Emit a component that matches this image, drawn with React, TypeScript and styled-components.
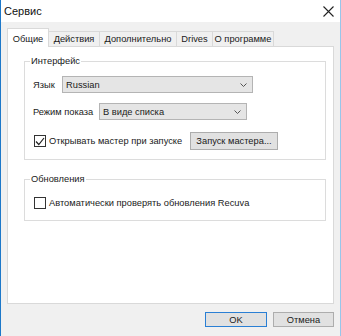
import React from 'react';
import styled, { createGlobalStyle } from 'styled-components';

const GlobalStyles = createGlobalStyle`
  html, body {
    margin: 0;
    padding: 0;
    background: #ffffff;
  }
  * {
    box-sizing: border-box;
  }
`;

const Window = styled.div`
  width: 341px;
  height: 336px;
  display: flex;
  flex-direction: column;
  border-left: 1px solid #1d78c9;
  border-right: 1px solid #97c6ea;
  font-family: "Liberation Sans", Arial, sans-serif;
  font-size: 9.3px;
  color: #1a1a1a;
  overflow: hidden;
`;

const TitleBar = styled.div`
  height: 22px;
  flex: none;
  display: flex;
  align-items: center;
  justify-content: space-between;
  padding: 0 6px 0 3px;
  background: #ffffff;
`;

const Title = styled.span`
  font-size: 11px;
  color: #111;
`;

const CloseIcon = styled.svg`
  display: block;
  margin-top: 1px;
`;

const Body = styled.div`
  flex: 1;
  display: flex;
  flex-direction: column;
  padding: 6px 6px 0 6px;
  background: #f0f0f0;
  min-height: 0;
`;

const TabStrip = styled.div`
  display: flex;
  align-items: flex-end;
  height: 19px;
  margin-bottom: -1px;
  position: relative;
  z-index: 1;
`;

const Tab = styled.div<{ $active?: boolean; $width: number }>`
  width: ${p => p.$width}px;
  height: ${p => (p.$active ? 19 : 15)}px;
  margin-bottom: ${p => (p.$active ? 0 : 1)}px;
  margin-left: -1px;
  display: flex;
  align-items: center;
  justify-content: center;
  border: 1px solid #d9d9d9;
  border-bottom: none;
  background: ${p => (p.$active ? '#ffffff' : '#f0f0f0')};
  padding-top: ${p => (p.$active ? 1 : 0)}px;
  white-space: nowrap;
  &:first-child {
    margin-left: 0;
  }
`;

const Panel = styled.div`
  flex: 1;
  display: flex;
  flex-direction: column;
  gap: 13px;
  padding: 8px 7px 0 16px;
  background: #ffffff;
  border: 1px solid #d9d9d9;
`;

const Group = styled.fieldset<{ $padTop: number; $padBottom: number }>`
  margin: 0;
  min-width: 0;
  border: 1px solid #dcdcdc;
  padding: ${p => p.$padTop}px 0 ${p => p.$padBottom}px 8px;
  display: flex;
  flex-direction: column;
`;

const Legend = styled.legend`
  margin-left: -3px;
  padding: 0 1px;
  line-height: 12px;
  height: 12px;
`;

const Row = styled.div<{ $height: number; $gapAfter?: number }>`
  height: ${p => p.$height}px;
  margin-bottom: ${p => p.$gapAfter || 0}px;
  display: flex;
  align-items: center;
`;

const FieldLabel = styled.span<{ $width: number }>`
  width: ${p => p.$width}px;
  flex: none;
  white-space: nowrap;
`;

const Select = styled.div<{ $width: number }>`
  width: ${p => p.$width}px;
  height: 17px;
  display: flex;
  align-items: center;
  justify-content: space-between;
  padding: 0 5px 0 3px;
  background: #e5e5e5;
  border: 1px solid #b4b4b4;
`;

const Check = styled.span<{ $checked?: boolean }>`
  width: 12px;
  height: 12px;
  flex: none;
  margin: 0 3px 0 1px;
  display: flex;
  align-items: center;
  justify-content: center;
  background: #ffffff;
  border: 1px solid #333333;
`;

const CheckText = styled.span`
  white-space: nowrap;
`;

const Button = styled.button<{ $default?: boolean; $width: number }>`
  width: ${p => p.$width}px;
  height: 15px;
  padding: 0;
  font: inherit;
  color: #1a1a1a;
  background: #e1e1e1;
  border: 1px solid ${p => (p.$default ? '#2a7fd4' : '#adadad')};
  display: flex;
  align-items: center;
  justify-content: center;
  white-space: nowrap;
`;

const WizardButton = styled(Button)`
  height: 18px;
  margin-left: auto;
  margin-right: 47px;
`;

const Footer = styled.div`
  flex: none;
  display: flex;
  justify-content: flex-end;
  gap: 6px;
  padding: 8px 0 9px;
`;

const Chevron = () => (
  <svg width="7" height="4" viewBox="0 0 7 4">
    <polyline points="0.5,0.5 3.5,3.5 6.5,0.5" fill="none" stroke="#555" strokeWidth="1" />
  </svg>
);

const tabs = [
  { label: 'Общие', width: 42 },
  { label: 'Действия', width: 52 },
  { label: 'Дополнительно', width: 78 },
  { label: 'Drives', width: 37 },
  { label: 'О программе', width: 62 },
];

function App() {
  return (
    <>
      <GlobalStyles />
      <Window>
        <TitleBar>
          <Title>Сервис</Title>
          <CloseIcon width="11" height="11" viewBox="0 0 11 11">
            <path d="M0.5 0.5 L10.5 10.5 M10.5 0.5 L0.5 10.5" stroke="#222" strokeWidth="1.1" />
          </CloseIcon>
        </TitleBar>
        <Body>
          <TabStrip>
            {tabs.map((t, i) => (
              <Tab key={t.label} $active={i === 0} $width={t.width}>
                {t.label}
              </Tab>
            ))}
          </TabStrip>
          <Panel>
            <Group $padTop={9} $padBottom={9}>
              <Legend>Интерфейс</Legend>
              <Row $height={17} $gapAfter={10}>
                <FieldLabel $width={29}>Язык</FieldLabel>
                <Select $width={191}>
                  <span>Russian</span>
                  <Chevron />
                </Select>
              </Row>
              <Row $height={17} $gapAfter={12}>
                <FieldLabel $width={66}>Режим показа</FieldLabel>
                <Select $width={148}>
                  <span>В виде списка</span>
                  <Chevron />
                </Select>
              </Row>
              <Row $height={18}>
                <Check $checked>
                  <svg width="10" height="9" viewBox="0 0 10 9">
                    <polyline points="1,4.5 3.8,7.5 9,1" fill="none" stroke="#222" strokeWidth="1.2" />
                  </svg>
                </Check>
                <CheckText>Открывать мастер при запуске</CheckText>
                <WizardButton $width={88}>Запуск мастера...</WizardButton>
              </Row>
            </Group>
            <Group $padTop={11} $padBottom={11}>
              <Legend>Обновления</Legend>
              <Row $height={13}>
                <Check />
                <CheckText>Автоматически проверять обновления Recuva</CheckText>
              </Row>
            </Group>
          </Panel>
          <Footer>
            <Button $default $width={62}>OK</Button>
            <Button $width={61}>Отмена</Button>
          </Footer>
        </Body>
      </Window>
    </>
  );
}

export default App;
